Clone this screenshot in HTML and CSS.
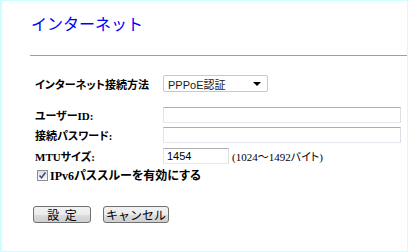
FILE: index.html
```html
<!DOCTYPE html>
<html lang="ja">
<head>
  <meta charset="UTF-8" />
  <title>インターネット</title>
  <link rel="stylesheet" href="styles.css">
</head>
<body>
  <div class="frame">
    <h1 class="title">インターネット</h1>
    <hr class="rule">

    <form class="setup">
      <div class="row row-method">
        <span class="label">インターネット接続方法</span>
        <div class="select">
          <span>PPPoE認証</span>
          <span class="caret"></span>
        </div>
      </div>
      <div class="row row-user">
        <span class="label">ユーザーID:</span>
        <input class="field wide" type="text">
      </div>
      <div class="row row-pass">
        <span class="label">接続パスワード:</span>
        <input class="field wide" type="password">
      </div>
      <div class="row row-mtu">
        <span class="label">MTUサイズ:</span>
        <input class="field short" type="text" value="1454">
        <span class="hint">(1024〜1492バイト)</span>
      </div>
      <div class="row row-check">
        <span class="check">
          <svg width="9" height="9" viewBox="0 0 9 9"><path d="M1.5 4.5 L3.5 6.8 L7.5 1.5" fill="none" stroke="#3c4f8c" stroke-width="1.6"/></svg>
        </span>
        <span class="label">IPv6パススルーを有効にする</span>
      </div>

      <div class="actions">
        <button type="button" class="btn btn-set">設&nbsp;&nbsp;定</button>
        <button type="button" class="btn btn-cancel">キャンセル</button>
      </div>
    </form>
  </div>
</body>
</html>
```

FILE: styles.css
```css
* {
  box-sizing: border-box;
}

html, body {
  margin: 0;
  padding: 0;
  background: #fff;
}

.frame {
  width: 408px;
  height: 252px;
  border: 1px solid #ccffff;
  border-left-width: 2px;
  font-family: "Liberation Serif", "Noto Sans CJK JP", serif;
  color: #000;
}

.title {
  margin: 11px 0 0 29px;
  font-family: "Noto Sans CJK JP", sans-serif;
  font-weight: 400;
  font-size: 16px;
  line-height: 22px;
  color: #0000ff;
}

.rule {
  margin: 21px 0 0 28px;
  border: none;
  border-top: 1px solid #a0a0a0;
  height: 0;
}

.setup {
  padding: 19px 0 0 31px;
}

.row {
  display: flex;
  align-items: center;
  height: 16px;
}

.row-method {
  height: 17px;
  margin-bottom: 15px;
}

.row-pass {
  margin-top: 4px;
}

.row-mtu {
  margin-top: 5px;
}

.row-check {
  margin-top: 3px;
}

.label {
  width: 130px;
  flex: none;
  padding-left: 2px;
  font-size: 11px;
  font-weight: 700;
  font-feature-settings: "palt";
  white-space: nowrap;
}

.row-check .label {
  width: auto;
  padding-left: 0;
  font-size: 12px;
}

.select {
  width: 105px;
  height: 17px;
  display: flex;
  align-items: center;
  justify-content: space-between;
  padding: 0 6px 0 4px;
  border: 1px solid #c8c8c8;
  border-radius: 2px;
  font-family: "Liberation Sans", "Noto Sans CJK JP", sans-serif;
  font-size: 11px;
  color: #1a1a1a;
}

.caret {
  width: 0;
  height: 0;
  border-left: 4px solid transparent;
  border-right: 4px solid transparent;
  border-top: 4px solid #000;
}

.field {
  height: 16px;
  padding: 0 3px;
  border: 1px solid;
  border-color: #abadb3 #dbdfe6 #e3e9ef #e2e3ea;
  font-family: "Liberation Sans", sans-serif;
  font-size: 11px;
  color: #000;
  outline: none;
}

.wide {
  width: 238px;
}

.short {
  width: 66px;
}

.hint {
  margin-left: 3px;
  font-size: 11px;
  font-feature-settings: "palt";
  white-space: nowrap;
}

.check {
  width: 11px;
  height: 11px;
  margin: 0 2px 0 4px;
  display: flex;
  align-items: center;
  justify-content: center;
  border: 1px solid #8e8f8f;
  background: linear-gradient(#dcdcdc, #fbfbfb);
}

.actions {
  display: flex;
  gap: 12px;
  margin-top: 23px;
}

.btn {
  height: 17px;
  padding: 0;
  border: 1px solid #707070;
  border-radius: 3px;
  background: linear-gradient(#f2f2f2 0%, #ebebeb 50%, #dddddd 51%, #cfcfcf 100%);
  font-family: "Noto Sans CJK JP", sans-serif;
  font-size: 12px;
  line-height: 15px;
  color: #000;
}

.btn-set {
  width: 58px;
}

.btn-cancel {
  width: 66px;
}
```
